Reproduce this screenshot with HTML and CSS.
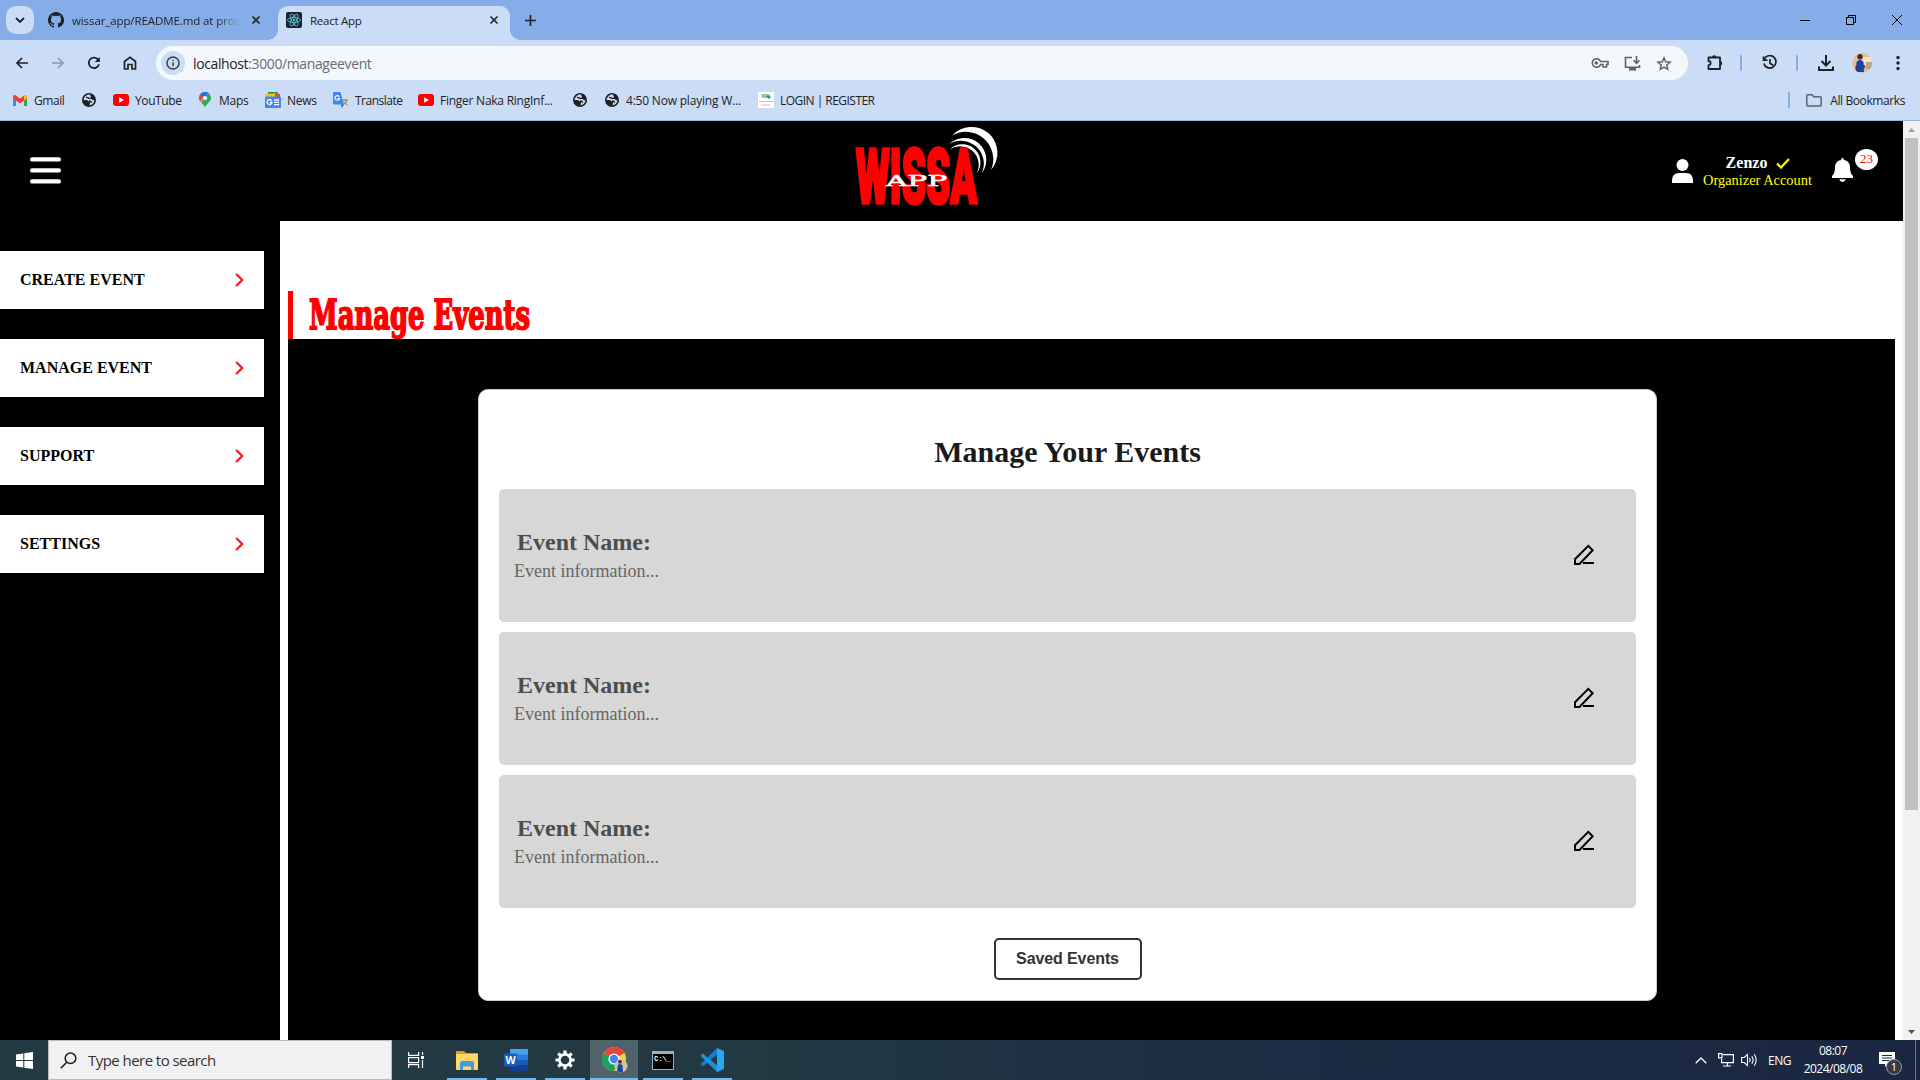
FILE: index.html
```html
<!DOCTYPE html>
<html lang="en">
<head>
<meta charset="utf-8">
<title>React App</title>
<link rel="stylesheet" href="styles.css">
</head>
<body>
<svg class="defs" width="0" height="0">
  <defs>
    <symbol id="globe" viewBox="0 0 14 14"><circle cx="7" cy="7" r="7" fill="#202124"/><path d="M8.3 1.6C7.6 3 9 3 9 4S7 4.400 7 5.300 8.400 6 9.400 6s1 1.600 2.900 1.200C12.300 9.600 10.500 12 7.600 12.300c.4-1-.1-2 .9-2.700-.5-1.300-1.500-.9-2.300-1.700S4.300 7.200 1.700 7.100C1.800 4 4.600 1.100 8.300 1.600z" fill="#cbdcf6"/><path d="M4 4.500c2-.5 2 1 3.500.8M7 8c2.500.3 1.800 1.200 3 1.200" stroke="#202124" stroke-width="1.300" fill="none"/></symbol>
    <symbol id="yt" viewBox="0 0 16 12"><rect width="16" height="12" rx="3" fill="#f00"/><path d="M6.200 3.300v5.400L11 6z" fill="#fff"/></symbol>
    <symbol id="close" viewBox="0 0 10 10"><path d="M1.500 1.500l7 7M8.500 1.500l-7 7" stroke="#202124" stroke-width="1.600"/></symbol>
    <symbol id="chevron" viewBox="0 0 9 14"><path d="M1.200 1l6 6-6 6" fill="none" stroke="#f8141a" stroke-width="2.200"/></symbol>
    <symbol id="pencil" viewBox="0 0 22 22"><path d="M2 20v-4.800L15.300 1.900l4.400 4.400L6.500 20z" fill="none" stroke="#000" stroke-width="2"/><path d="M10 19h11" stroke="#000" stroke-width="2"/></symbol>
  </defs>
</svg>

<header class="browser">
  <div class="tabs">
    <div class="tab-search"><svg width="10" height="6"><path d="M1 1l4 4 4-4" fill="none" stroke="#202124" stroke-width="1.800"/></svg></div>
    <div class="tab">
      <svg width="16" height="16" viewBox="0 0 16 16"><path fill="#202124" d="M8 0a8 8 0 0 0-2.530 15.590c.4.070.55-.17.55-.38v-1.490c-2.010.37-2.530-.49-2.690-.94-.09-.23-.48-.94-.82-1.130-.28-.15-.68-.52-.01-.53.63-.01 1.080.58 1.230.82.72 1.210 1.870.87 2.330.66.070-.52.280-.87.510-1.070-1.780-.2-3.640-.89-3.640-3.950 0-.87.310-1.590.82-2.150-.08-.2-.36-1.020.08-2.120 0 0 .67-.21 2.200.82a7.600 7.600 0 0 1 4 0c1.530-1.040 2.200-.82 2.200-.82.44 1.100.16 1.920.08 2.120.51.56.82 1.270.82 2.150 0 3.070-1.870 3.750-3.650 3.950.29.25.54.73.54 1.480v2.200c0 .21.15.46.55.38A8 8 0 0 0 8 0z"/></svg>
      <span class="tab-title faded">wissar_app/README.md at prod</span>
      <svg class="tab-x" width="10" height="10"><use href="#close"/></svg>
    </div>
    <div class="tab active">
      <svg width="16" height="16" viewBox="0 0 16 16"><rect width="16" height="16" rx="2" fill="#1d2228"/><g fill="none" stroke="#53c1de" stroke-width=".9"><ellipse cx="8" cy="8" rx="6.500" ry="2.500"/><ellipse cx="8" cy="8" rx="6.500" ry="2.500" transform="rotate(60 8 8)"/><ellipse cx="8" cy="8" rx="6.500" ry="2.500" transform="rotate(120 8 8)"/></g><circle cx="8" cy="8" r="1.300" fill="#53c1de"/></svg>
      <span class="tab-title">React App</span>
      <svg class="tab-x" width="10" height="10"><use href="#close"/></svg>
    </div>
    <svg class="plus" width="11" height="11"><path d="M5.500 0v11M0 5.500h11" stroke="#202124" stroke-width="1.700"/></svg>
    <div class="win">
      <svg width="10" height="10"><path d="M0 5.500h10" stroke="#000"/></svg>
      <svg width="10" height="10"><path d="M.5 2.500h7v7h-7zM2.500 2.500v-2h7v7h-2" fill="none" stroke="#000"/></svg>
      <svg width="10" height="10"><path d="M0 0l10 10M10 0L0 10" stroke="#000"/></svg>
    </div>
  </div>

  <div class="toolbar">
    <div class="nav">
      <svg width="14" height="12"><path d="M13 6H2M7 1L2 6l5 5" fill="none" stroke="#202124" stroke-width="1.700"/></svg>
      <svg width="14" height="12"><path d="M1 6h11M7 1l5 5-5 5" fill="none" stroke="#8698b6" stroke-width="1.700"/></svg>
      <svg width="14" height="14"><path d="M12 8.300A5.200 5.200 0 1 1 10.700 3.200L12 4.500" fill="none" stroke="#202124" stroke-width="1.800"/><path d="M12.800 1v5h-5z" fill="#202124"/></svg>
      <svg width="14" height="14"><path d="M1.500 13V5.500L7 1.300l5.500 4.200V13H9V8.500H5V13z" fill="none" stroke="#202124" stroke-width="1.700"/></svg>
    </div>
    <div class="omnibox">
      <span class="info"><svg width="14" height="14"><circle cx="7" cy="7" r="6" fill="none" stroke="#3c4043" stroke-width="1.500"/><path d="M7 6.300V10.300M7 3.700v1.400" stroke="#3c4043" stroke-width="1.500"/></svg></span>
      <span class="url"><b>localhost</b>:3000/manageevent</span>
      <span class="omni-icons">
        <svg width="18" height="12" fill="none" stroke="#5f6368" stroke-width="1.600"><path d="M9.600 4.500A4.300 4.300 0 1 0 9.600 7.500H12v2.500h3.500V7.500H17v-3z"/><circle cx="5.300" cy="6" r="1" fill="#5f6368"/></svg>
        <svg width="17" height="15" fill="none" stroke="#5f6368" stroke-width="1.600"><path d="M8 1.500H1.500v9.800h14V9M12.500 0v7M9.500 4.300l3 3 3-3"/><path d="M5 13h7" stroke-width="3"/></svg>
        <svg width="16" height="15" fill="none" stroke="#5f6368" stroke-width="1.500"><path d="M8 1.900l1.700 3.900 4.300.4-3.200 2.800.9 4.200L8 11l-3.700 2.200.9-4.200L2 6.200l4.300-.4z"/></svg>
      </span>
    </div>
    <div class="tools">
      <svg width="18" height="18" viewBox="0 0 18 18"><path d="M2.500 3.500h11.500v11.500h-11.500v-3.800a2.100 2.100 0 0 0 0-4.200z" fill="none" stroke="#202124" stroke-width="1.800" stroke-linejoin="round"/><path d="M6 3.500a2.200 2.200 0 0 1 4.400 0zM14 7a2.200 2.200 0 0 1 0 4.400z" fill="#202124"/></svg>
      <i></i>
      <svg width="16" height="16" viewBox="0 0 16 16" fill="none" stroke="#202124" stroke-width="1.700"><path d="M2 4.500A6.200 6.200 0 1 1 1.800 8.500M1.500 1.500V5.200h4M8 4v4.300l3 2"/></svg>
      <i></i>
      <svg width="16" height="16" viewBox="0 0 16 16" fill="none" stroke="#202124" stroke-width="2"><path d="M8 0v10M3.500 6L8 10.500 12.500 6M1 11.500V15h14v-3.500"/></svg>
      <svg class="face" width="20" height="20" viewBox="0 0 20 20"><clipPath id="fc"><circle cx="10" cy="10" r="10"/></clipPath><g clip-path="url(#fc)"><rect width="20" height="20" fill="#dcc19a"/><path d="M11 4h9v8h-9z" fill="#efe6cf"/><path d="M14 9h6v7h-6z" fill="#b9a585"/><path d="M4 19l.5-10L7 7h2l2.500 2 .5 10z" fill="#1b43ad"/><circle cx="8" cy="3.800" r="2.700" fill="#4b2b1c"/><path d="M4.500 12.500l-.5 4M11.500 12l1 3" stroke="#4b2b1c" stroke-width="1.500"/></g></svg>
      <svg width="4" height="16" fill="#202124"><circle cx="2" cy="2.500" r="1.700"/><circle cx="2" cy="8" r="1.700"/><circle cx="2" cy="13.500" r="1.700"/></svg>
    </div>
  </div>

  <div class="bookmarks">
    <a class="bm gmail"><svg width="14" height="11" viewBox="0 0 14 11"><path d="M0 1.500V11h3V4z" fill="#4285f4"/><path d="M14 1.500V11h-3V4z" fill="#34a853"/><path d="M0 1.500C0 0 2-.4 3 .5L7 3.600 11 .5c1-.9 3-.5 3 1v1.700L7 8.500 0 3.200z" fill="#ea4335"/><path d="M11 .5c1-.9 3-.5 3 1v1.700l-3 2.200z" fill="#fbbc04"/></svg>Gmail</a>
    <a class="bm dot"><svg width="14" height="14"><use href="#globe"/></svg></a>
    <a class="bm video"><svg width="16" height="12"><use href="#yt"/></svg>YouTube</a>
    <a class="bm maps"><svg width="12" height="16" viewBox="0 0 12 16"><path d="M6 16C5.500 12 0 10 0 6a6 6 0 0 1 12 0c0 4-5.500 6-6 10z" fill="#34a853"/><path d="M1.500 2L9.500 1.200 3 10C1.500 8.500 0 7.500 0 6c0-2 .8-3.300 1.500-4z" fill="#fbbc04"/><path d="M0 6c0-2 .8-3 1.500-4L5 5 1 9C.4 8 0 7 0 6z" fill="#ea4335"/><path d="M1.500 2C4 -.8 8-.3 9.700 1.300L5 6z" fill="#1a73e8"/><path d="M9.700 1.300L3.500 8.700" stroke="#4285f4" stroke-width="2"/><circle cx="6" cy="6" r="2.100" fill="#fff"/></svg>Maps</a>
    <a class="bm news"><svg width="16" height="16" viewBox="0 0 16 16"><path d="M3 0h10v5H3z" fill="#0c9d58"/><path d="M0 2l11-.8L12 6H1z" fill="#ffc107"/><path d="M10 2h5v5h-5z" fill="#ea4335"/><rect y="4.500" width="16" height="11.500" rx="1" fill="#4285f4"/><path d="M6.700 8.800A2.500 2.500 0 1 0 7 10.500H4.700M9 8h5M9 10.300h5M9 12.600h5" fill="none" stroke="#fff" stroke-width="1.300"/></svg>News</a>
    <a class="bm trans"><svg width="16" height="16" viewBox="0 0 16 16"><path d="M7 4h8q1 0 1 1v10q0 1-1 1H9z" fill="#dadce0"/><path d="M1 0h6.500L11 12.500H1q-1 0-1-1V1q0-1 1-1z" fill="#4285f4"/><path d="M8 12.500h3L8.800 16z" fill="#1967d2"/><path d="M6.300 4.800A2.300 2.300 0 1 0 6.500 6.500H4.400" fill="none" stroke="#fff" stroke-width="1.100"/><path d="M10 8h5M12.500 7v1.500M14 8c-.5 2-2 4-3.500 5M11 9.500l3.500 4" fill="none" stroke="#75797f"/></svg>Translate</a>
    <a class="bm naka"><svg width="16" height="12"><use href="#yt"/></svg>Finger Naka RingInf...</a>
    <a class="bm dot2"><svg width="14" height="14"><use href="#globe"/></svg></a>
    <a class="bm playing"><svg width="14" height="14"><use href="#globe"/></svg>4:50 Now playing W...</a>
    <a class="bm login"><svg width="16" height="16" viewBox="0 0 16 16"><rect width="16" height="16" fill="#fff"/><ellipse cx="7.500" cy="4" rx="4.500" ry="2.200" fill="#9bc79b"/><path d="M8 4.500q3-2 5 .5l-2 2z" fill="#3b8f94"/><path d="M1 9.500h14" stroke="#999" stroke-width=".6"/><path d="M3 13h9" stroke="#dba898" stroke-width=".8"/></svg>LOGIN | REGISTER</a>
    <a class="bm all"><svg width="16" height="13" viewBox="0 0 16 13"><path d="M.8 11V1.800q0-1 1-1H6L7.800 2.700h6.400q1 0 1 1V11q0 1-1 1H1.800q-1 0-1-1z" fill="none" stroke="#5f6368" stroke-width="1.500"/></svg>All Bookmarks</a>
  </div>
</header>

<div class="viewport">
  <div class="site">
    <div class="topbar">
      <svg class="burger" width="31" height="28" fill="#fff"><rect y=".2" width="31" height="4.400" rx="2.200"/><rect y="11.200" width="31" height="4.400" rx="2.200"/><rect y="22.200" width="31" height="4.400" rx="2.200"/></svg>
      <svg class="logo" width="146" height="84" viewBox="0 0 146 84">
        <path d="M98 8.700A25.800 25.800 0 0 1 137 43A27.300 27.300 0 0 0 98 8.700z" fill="#fff"/>
        <path d="M95 17.300A21.900 21.900 0 0 1 127.700 46.300A22.800 22.800 0 0 0 95 17.300z" fill="#fff"/>
        <path d="M96 22.300A18 18 0 0 1 122.700 46.300A18.600 18.600 0 0 0 96 22.300z" fill="#fff"/>
        <text class="logo-main" x="2" y="75.500" textLength="121" lengthAdjust="spacingAndGlyphs">WISSA</text>
        <text class="logo-sub" x="32" y="58.500" textLength="61" lengthAdjust="spacingAndGlyphs">APP</text>
      </svg>
      <div class="account">
        <svg width="21" height="24" fill="#fff"><circle cx="10.500" cy="6" r="6"/><path d="M0 24v-2.500Q0 14 7 14h7q7 0 7 7.500V24z"/></svg>
        <div class="who">
          <div class="name">Zenzo<svg width="14" height="11"><path d="M1 5.500l4 4L13 1" fill="none" stroke="#ff0" stroke-width="2.200"/></svg></div>
          <div class="role">Organizer Account</div>
        </div>
        <div class="bell"><svg width="21" height="24" fill="#fff"><path d="M10.500 0q1.500 0 1.500 2 6 1 6 7.500 0 6 3 8.500v2H0v-2q3-2.500 3-8.500Q3 3 9 2 9 0 10.500 0zM7.200 21.200h6.600q-1 2.800-3.300 2.800t-3.300-2.800z"/></svg><span class="count">23</span></div>
      </div>
    </div>
    <div class="body">
      <nav class="side">
        <a>CREATE EVENT<svg width="9" height="14"><use href="#chevron"/></svg></a>
        <a>MANAGE EVENT<svg width="9" height="14"><use href="#chevron"/></svg></a>
        <a>SUPPORT<svg width="9" height="14"><use href="#chevron"/></svg></a>
        <a>SETTINGS<svg width="9" height="14"><use href="#chevron"/></svg></a>
      </nav>
      <main class="main">
        <h1 class="title"><svg width="240" height="48"><text x="1" y="38" textLength="221" lengthAdjust="spacingAndGlyphs">Manage Events</text></svg></h1>
        <div class="stage">
          <section class="card">
            <h2>Manage Your Events</h2>
            <article class="event"><div><h3>Event Name:</h3><p>Event information...</p></div><svg width="22" height="22"><use href="#pencil"/></svg></article>
            <article class="event"><div><h3>Event Name:</h3><p>Event information...</p></div><svg width="22" height="22"><use href="#pencil"/></svg></article>
            <article class="event"><div><h3>Event Name:</h3><p>Event information...</p></div><svg width="22" height="22"><use href="#pencil"/></svg></article>
            <button class="saved">Saved Events</button>
          </section>
        </div>
      </main>
    </div>
  </div>
  <div class="scroll">
    <svg width="17" height="17"><path d="M5 11l3.500-4 3.500 4z" fill="#a3a3a3"/></svg>
    <div class="thumb"></div>
    <svg class="down" width="17" height="17"><path d="M5 7h7l-3.500 4z" fill="#505050"/></svg>
  </div>
</div>

<footer class="taskbar">
  <div class="start"><svg width="17" height="17" fill="#fff"><path d="M0 2.400L7.300 1.400V8H0zM8.300 1.200L17 0v8H8.300zM0 9h7.300v6.600L0 14.600zM8.300 9H17v8l-8.700-1.200z"/></svg></div>
  <div class="search"><svg width="17" height="17" fill="none" stroke="#1a1a1a" stroke-width="1.500"><circle cx="10.500" cy="6.300" r="5.300"/><path d="M6.800 10.200L.8 16.300"/></svg>Type here to search</div>
  <div class="taskview"><svg width="16" height="16" fill="none" stroke="#fff" stroke-width="1.200"><path d="M.6 0v3.400h10V0M.6 5.600h10v5h-10zM.6 16v-3.400h10V16M14.500 0v3M14.500 8v8"/><path d="M13 5.500h3" stroke-width="3"/></svg></div>
  <div class="apps">
    <div class="app"><svg width="22" height="19"><path d="M0 1q0-1 1-1h7l2 2h11q1 0 1 1v14H0z" fill="#e0a010"/><path d="M0 3h22v15q0 1-1 1H1q-1 0-1-1z" fill="#ffd766"/><path d="M4 19v-7q0-2 2-2h10q2 0 2 2v7h-3v-3.500H7V19z" fill="#3f9be8"/></svg></div>
    <div class="app"><svg width="24" height="22"><path d="M6 0h18v6H6z" fill="#41a5ee"/><path d="M6 5.500h18V11H6z" fill="#2b7cd3"/><path d="M6 11h18v5.500H6z" fill="#185abd"/><path d="M6 16.500h18V22H6z" fill="#103f91"/><rect y="4.500" width="13" height="13" rx="1" fill="#185abd"/><text class="w" x="1.500" y="14.800">W</text></svg></div>
    <div class="app"><svg width="20" height="20" viewBox="-10 -10 20 20"><circle r="5.600" fill="none" stroke="#fff" stroke-width="2.600"/><path d="M0-9.500V-6M0 9.500V6M-9.500 0H-6M9.500 0H6M-6.700-6.700l2.300 2.300M6.700 6.700L4.400 4.400M-6.700 6.700l2.300-2.300M6.700-6.700L4.400-4.400" stroke="#fff" stroke-width="3.200"/></svg></div>
    <div class="app chrome"><svg width="26" height="26" viewBox="0 0 26 26"><circle cx="12" cy="12" r="12" fill="#ffcd40"/><path d="M12 12L1.600 6A12 12 0 0 1 22.400 6z" fill="#ea4335"/><path d="M1.600 6A12 12 0 0 0 12 24l5-9-5-3z" fill="#1aa260"/><circle cx="12" cy="12" r="5.600" fill="#fff"/><circle cx="12" cy="12" r="4.300" fill="#4285f4"/><circle cx="19" cy="19" r="6.500" fill="#d6c3a4"/><path d="M15.200 24.300l.5-6 1.800-1.300h1l2 1.300.5 6.700q-3 .8-5.800-.7z" fill="#1b43ad"/><circle cx="18" cy="14.800" r="1.900" fill="#4b2b1c"/></svg></div>
    <div class="app"><svg width="22" height="19"><rect width="22" height="19" fill="#a8adb0"/><path d="M1 3h20v15H1z" fill="#000"/><text class="cli" x="2" y="10">C:\_</text></svg></div>
    <div class="app"><svg width="24" height="24"><path d="M17 0l7 3v18l-7 3z" fill="#29a8f2"/><path d="M17 0v6.500L3 18.500.3 16.300z" fill="#0f7fcb"/><path d="M17 24v-6.500L3 5.500.3 7.700z" fill="#1c93dd"/></svg></div>
  </div>
  <div class="tray">
    <svg class="t-up" width="12" height="7"><path d="M.7 6.300L6 1l5.300 5.300" fill="none" stroke="#fff" stroke-width="1.300"/></svg>
    <svg class="t-net" width="16" height="14" fill="none" stroke="#fff" stroke-width="1.200"><path d="M5 1.600h10.400v8H3.600V6M9.500 9.600v3.400M5 13h8M.6.6H4v4.300H.6z"/></svg>
    <svg class="t-vol" width="17" height="14" fill="none" stroke="#fff" stroke-width="1.100"><path d="M.6 4.500h2.600l3.300-3v11l-3.300-3H.6zM8.500 5q1.200 2 0 4M10.800 3.200q2.600 3.800 0 7.600M13.200 1.200q4 5.800 0 11.600"/></svg>
    <span class="lang">ENG</span>
    <div class="clock"><span>08:07</span><span>2024/08/08</span></div>
    <div class="notes"><svg width="16" height="15"><path d="M0 0h16v12H9l-3 3v-3H0z" fill="#fff"/><path d="M3 3.500h10M3 6h10M3 8.500h7" stroke="#1a2742"/></svg><span>1</span></div>
  </div>
</footer>
</body>
</html>
```
FILE: styles.css
```css
* { box-sizing: border-box; }
body {
  margin: 0;
  width: 1920px;
  height: 1080px;
  overflow: hidden;
  display: flex;
  flex-direction: column;
  font-family: "Liberation Serif", serif;
  background: #000;
}
svg { flex: none; display: block; }
.defs { position: absolute; }
h1, h2, h3, p { margin: 0; }

/* browser chrome */
.browser {
  height: 121px;
  flex: none;
  background: #cbdcf6;
  border-bottom: 1px solid #a2b4d3;
  font: 12px "Open Sans", sans-serif;
  letter-spacing: -0.25px;
  color: #202124;
}
.tabs { height: 40px; display: flex; background: #86adea; padding: 6px 0 0 6px; }
.tab-search {
  width: 28px; height: 28px; border-radius: 10px; background: #cbdcf6;
  display: flex; align-items: center; justify-content: center;
}
.tab { width: 236px; display: flex; align-items: center; padding: 0 12px 6px 14px; margin-right: 8px; }
.tab-title { margin-left: 8px; flex: 1; white-space: nowrap; overflow: hidden; font-size: 11.5px; }
.faded { flex: none; width: 166px; margin-right: 13px; letter-spacing: -0.1px; -webkit-mask-image: linear-gradient(90deg, #000 145px, transparent 168px); }
.tab.active { position: relative; width: 232px; background: #cbdcf6; border-radius: 10px 10px 0 0; padding: 0 11px 6px 8px; margin: 0; }
.tab.active::before, .tab.active::after {
  content: ""; position: absolute; bottom: 0; width: 10px; height: 10px;
}
.tab.active::before { left: -10px; background: radial-gradient(circle at 0 0, transparent 9.5px, #cbdcf6 10px); }
.tab.active::after { right: -10px; background: radial-gradient(circle at 100% 0, transparent 9.5px, #cbdcf6 10px); }
.plus { margin: 9px 0 0 15px; }
.win { margin: 9px 18px 0 auto; display: flex; gap: 36px; }

.toolbar { height: 46px; display: flex; align-items: center; }
.nav { width: 156px; display: flex; gap: 22px; padding-left: 15px; align-items: center; }
.omnibox { width: 1532px; height: 34px; border-radius: 17px; background: #f4f8fd; display: flex; align-items: center; padding: 0 16px 0 5px; }
.info { width: 24px; height: 24px; border-radius: 50%; background: #cbdcf6; display: flex; align-items: center; justify-content: center; }
.url { margin-left: 8px; font-size: 14px; letter-spacing: -0.38px; color: #686d73; }
.url b { font-weight: 400; color: #202124; }
.omni-icons { margin-left: auto; display: flex; align-items: center; gap: 15px; }
.tools { display: flex; align-items: center; padding-left: 18px; }
.tools i { width: 2px; height: 16px; border-radius: 1px; background: #86adea; margin: 0 20px 0 16px; }
.tools i + svg + i { margin: 0 20px 0 18px; }
.face { margin: 0 24px 0 18px; }

.bookmarks { height: 28px; display: flex; align-items: center; padding-left: 13px; }
.bm { display: flex; align-items: center; gap: 6px; white-space: nowrap; }
.gmail { width: 69px; gap: 7px; letter-spacing: -0.45px; }
.dot { width: 31px; }
.video { width: 86px; letter-spacing: -0.4px; }
.maps { width: 66px; gap: 8px; }
.news { width: 68px; }
.trans { width: 85px; letter-spacing: -0.5px; }
.naka { width: 155px; }
.dot2 { width: 32px; }
.playing { width: 153px; gap: 7px; letter-spacing: -0.2px; }
.login { letter-spacing: -0.53px; }
.all { margin: 0 15px 0 auto; gap: 8px; border-left: 2px solid #86adea; padding-left: 16px; letter-spacing: -0.4px; height: 16px; }

/* web page */
.viewport { height: 919px; flex: none; display: flex; }
.site { width: 1903px; display: flex; flex-direction: column; }
.topbar { height: 100px; flex: none; background: #000; display: flex; padding-left: 30px; }
.burger { margin-top: 36px; }
.logo { margin: 6px 0 0 793px; overflow: visible; }
.logo-main { font: 900 76px Roboto, sans-serif; fill: #f00; stroke: #f00; stroke-width: 3.6px; }
.logo-sub { font: 15.5px "DejaVu Serif", serif; fill: #fff; stroke: #fff; stroke-width: .6px; }
.account { margin-left: auto; display: flex; padding-right: 25px; }
.account > svg { margin-top: 38px; }
.who { margin: 33px 18px 0 9px; width: 112px; text-align: center; white-space: nowrap; }
.name { display: flex; justify-content: center; align-items: center; gap: 9px; font-weight: bold; font-size: 16px; line-height: 18px; color: #fff; }
.role { font-size: 14.4px; line-height: 17px; color: #ff0; margin-left: -1px; }
.bell { display: flex; padding-top: 37px; }
.count { width: 23px; height: 21px; border-radius: 50%; margin: -9px 0 0 2px; background: #fff; color: #f00; font-size: 13px; line-height: 20px; text-align: center; }

.body { flex: 1; display: flex; min-height: 0; }
.side { width: 280px; background: #000; display: flex; flex-direction: column; gap: 30px; padding-top: 30px; }
.side a { width: 264px; height: 58px; background: #fff; display: flex; align-items: center; justify-content: space-between; padding: 0 20px 0 20px; font-weight: bold; font-size: 16px; color: #000; }
.main { flex: 1; background: #fff; padding: 70px 8px 0; display: flex; flex-direction: column; }
.title { height: 48px; flex: none; border-left: 5px solid #f00; padding-left: 15px; }
.title svg { overflow: visible; }
.title text { font: bold 41px "DejaVu Serif Condensed", "DejaVu Serif", serif; fill: #f00; stroke: #f00; stroke-width: 1.8px; }
.stage { flex: 1; background: #000; padding: 50px 0 0 190px; }
.card { width: 1179px; height: 612px; background: #fff; border: 1px solid #ccc; border-radius: 10px; padding: 44px 20px 0; display: flex; flex-direction: column; gap: 10px; }
.card h2 { height: 45px; line-height: 36px; font-size: 30px; text-align: center; color: #1a1a1a; }
.event { height: 133px; flex: none; background: #d7d7d7; border-radius: 5px; display: flex; align-items: center; justify-content: space-between; padding: 0 41px 0 15px; }
.event svg { margin-top: -1px; }
.event h3 { font-size: 24px; line-height: 30px; color: #4d4d4d; padding-left: 3px; }
.event p { font-size: 18px; line-height: 28px; color: #666; }
.saved { align-self: center; margin-top: 20px; width: 148px; height: 42px; border: 2px solid #333; border-radius: 5px; background: #fff; color: #333; font: bold 16px "Liberation Sans", sans-serif; letter-spacing: -0.1px; padding: 0; }

.scroll { width: 17px; background: #f1f1f1; display: flex; flex-direction: column; }
.thumb { width: 13px; margin: 0 2px; height: 672px; background: #c1c1c1; }
.down { margin-top: auto; }

/* taskbar */
.taskbar { height: 40px; flex: none; display: flex; background: linear-gradient(90deg, #223a43 0, #223943 40%, #1b2c43 65%, #1a2742 100%); color: #fff; font-family: "Open Sans", sans-serif; }
.start { width: 48px; display: flex; align-items: center; justify-content: center; }
.search { width: 344px; background: #f1f1f1; border: 1px solid #bababa; display: flex; align-items: center; gap: 11px; padding-left: 11px; font-size: 15px; letter-spacing: -0.55px; color: #333; }
.taskview { width: 48px; display: flex; align-items: center; justify-content: center; }
.apps { display: flex; gap: 1px; padding-left: 3px; }
.app { width: 48px; display: flex; align-items: center; justify-content: center; background: linear-gradient(#76b9ed, #76b9ed) center bottom / 40px 2px no-repeat; }
.app svg { margin-right: 1px; }
.chrome { background: linear-gradient(#76b9ed, #76b9ed) center bottom / 48px 2px no-repeat #50626a; padding-left: 2px; }
.w { font: bold 10.5px "Open Sans", sans-serif; fill: #fff; }
.cli { font: bold 7px "Liberation Mono", monospace; fill: #fff; }
.tray { margin-left: auto; display: flex; align-items: center; font-size: 12px; }
.t-net { margin: 0 7px 0 11px; }
.t-vol { margin-right: 10px; }
.lang { letter-spacing: -0.5px; width: 35px; }
.clock { width: 60px; display: flex; flex-direction: column; align-items: center; line-height: 18px; letter-spacing: -0.5px; white-space: nowrap; }
.notes { position: relative; margin-left: 16px; width: 37px; height: 40px; padding-top: 12px; border-right: 1px solid #707a8c; margin-right: 4px; }
.notes span { position: absolute; left: 7px; top: 19px; width: 16px; height: 16px; border: 1px solid #999; border-radius: 50%; background: #353b42; font-size: 11px; line-height: 14px; text-align: center; }
```
